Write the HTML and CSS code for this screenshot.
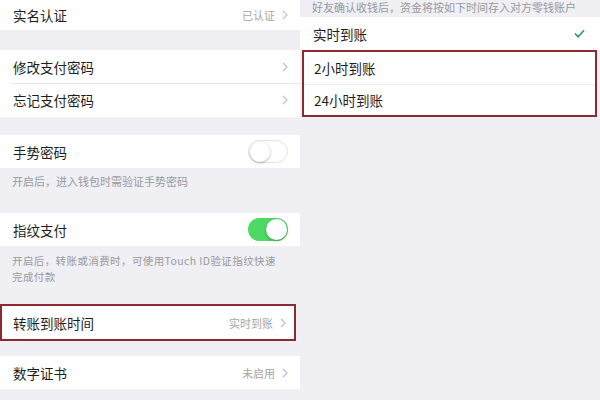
FILE: index.html
```html
<!DOCTYPE html>
<html lang="zh-CN">
<head>
<meta charset="utf-8">
<title>钱包设置</title>
<link rel="stylesheet" href="styles.css">
</head>
<body>
<div class="screen">
  <div class="col left">
    <div class="row first">
      <span class="label">实名认证</span>
      <span class="value">已认证</span>
      <svg class="chev" viewBox="0 0 6 10"><polyline points="1,1 5,5 1,9"/></svg>
    </div>
    <div class="gap g20"></div>
    <div class="group">
      <div class="row">
        <span class="label">修改支付密码</span>
        <svg class="chev" viewBox="0 0 6 10"><polyline points="1,1 5,5 1,9"/></svg>
      </div>
      <div class="row sep">
        <span class="label">忘记支付密码</span>
        <svg class="chev" viewBox="0 0 6 10"><polyline points="1,1 5,5 1,9"/></svg>
      </div>
    </div>
    <div class="gap g18"></div>
    <div class="row">
      <span class="label">手势密码</span>
      <span class="toggle off"><span class="knob"></span></span>
    </div>
    <div class="note n1">开启后，进入钱包时需验证手势密码</div>
    <div class="row">
      <span class="label">指纹支付</span>
      <span class="toggle on"><span class="knob"></span></span>
    </div>
    <div class="note n2">
      <div class="line">开启后，转账或消费时，可使用Touch ID验证指纹快速</div>
      <div class="line">完成付款</div>
    </div>
    <div class="hl hl-left">
      <div class="row inner">
        <span class="label">转账到账时间</span>
        <span class="value">实时到账</span>
        <svg class="chev" viewBox="0 0 6 10"><polyline points="1,1 5,5 1,9"/></svg>
      </div>
    </div>
    <div class="gap g15"></div>
    <div class="row">
      <span class="label">数字证书</span>
      <span class="value">未启用</span>
      <svg class="chev" viewBox="0 0 6 10"><polyline points="1,1 5,5 1,9"/></svg>
    </div>
  </div>
  <div class="col right">
    <div class="header">好友确认收钱后，资金将按如下时间存入对方零钱账户</div>
    <div class="row">
      <span class="label">实时到账</span>
      <svg class="check" viewBox="0 0 12 9"><polyline points="1,4.5 4.5,8 11,1"/></svg>
    </div>
    <div class="hl hl-right">
      <div class="row inner">
        <span class="label">2小时到账</span>
      </div>
      <div class="row inner sep">
        <span class="label">24小时到账</span>
      </div>
    </div>
  </div>
</div>
</body>
</html>
```

FILE: styles.css
```css
html, body {
  margin: 0;
  padding: 0;
  background: #efeff4;
}
body {
  font-family: "Noto Sans CJK SC", "Noto Sans", sans-serif;
  color: #1e1e1e;
}
.screen {
  display: flex;
  width: 600px;
  height: 400px;
  overflow: hidden;
}
.col {
  width: 300px;
  display: flex;
  flex-direction: column;
}
.row {
  height: 33px;
  background: #fff;
  display: flex;
  align-items: center;
  padding: 0 12px 0 13px;
  box-sizing: border-box;
  position: relative;
}
.row.first {
  height: 30px;
}
.row.sep {
  height: 34px;
}
.row.sep::before {
  content: "";
  position: absolute;
  left: 13px;
  right: 0;
  top: 0;
  height: 1px;
  background: #e6e6e9;
}
.label {
  font-size: 13.5px;
  flex: 1;
}
.value {
  font-size: 11px;
  color: #a6a6a6;
  margin-right: 7px;
}
.chev {
  width: 6px;
  height: 10px;
  fill: none;
  stroke: #c4c4c8;
  stroke-width: 1.3;
}
.gap.g20 { height: 20px; }
.gap.g18 { height: 18px; }
.gap.g15 { height: 15px; }
.note {
  font-size: 11px;
  color: #9a9a9e;
  padding: 0 12px;
  box-sizing: border-box;
}
.note.n1 {
  height: 45px;
  padding-top: 6px;
  line-height: 15px;
}
.note.n2 {
  height: 58px;
  padding-top: 7px;
  font-size: 10.5px;
  letter-spacing: 0.4px;
}
.note.n2 .line {
  height: 15.5px;
  line-height: 15.5px;
  white-space: nowrap;
}
.toggle {
  width: 40px;
  height: 23px;
  border-radius: 12px;
  box-sizing: border-box;
  display: flex;
  align-items: center;
  padding: 1px;
}
.toggle.off {
  border: 1.5px solid #e3e3e6;
  background: #fff;
}
.toggle.on {
  background: #4cd964;
  justify-content: flex-end;
}
.knob {
  width: 21px;
  height: 21px;
  border-radius: 50%;
  background: #fff;
  box-shadow: 0 1px 3px rgba(0,0,0,0.3);
}
.toggle.off .knob {
  width: 20px;
  height: 20px;
}
.hl {
  border: 2px solid #8c2a33;
  background: #fff;
}
.hl-left {
  width: 296px;
  box-sizing: border-box;
}
.hl-left .row {
  height: 33px;
  padding-right: 8px;
  padding-left: 11px;
}
.hl-right {
  margin-left: 2px;
  width: 295px;
  box-sizing: border-box;
}
.hl-right .row {
  padding-left: 10px;
  height: 32px;
}
.hl-right .row.sep {
  height: 31px;
}
.hl-right .row.sep::before {
  left: 0;
  background: #ececee;
}
.header {
  height: 17px;
  font-size: 11px;
  color: #9a9a9e;
  padding-left: 12px;
  line-height: 14px;
  white-space: nowrap;
}
.check {
  width: 11px;
  height: 9px;
  fill: none;
  stroke: #2f9a6c;
  stroke-width: 1.8;
  margin-right: 3px;
}
```
